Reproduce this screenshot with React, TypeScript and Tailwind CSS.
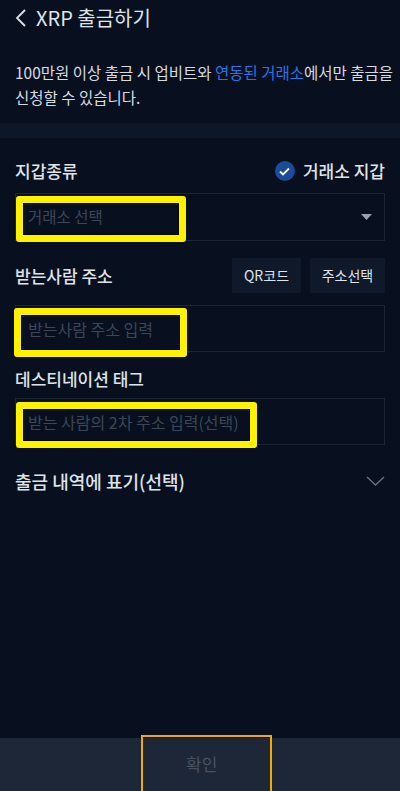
import * as React from 'react';

function YellowMark({ className }: { className: string }) {
  return (
    <div
      className={`absolute rounded-[3px] border-[7px] border-[#fff200] pointer-events-none ${className}`}
    >
      <div className="w-full h-full border border-black/60" />
    </div>
  );
}

export default function App() {
  return (
    <div
      className="w-[400px] h-[791px] bg-[#08101f] flex flex-col text-[#dfe3e9]"
      style={{ fontFamily: '"Noto Sans CJK KR", "Noto Sans", sans-serif' }}
    >
      {/* header */}
      <div className="h-[35px] flex items-center px-[14px] gap-[9px]">
        <svg width="13" height="20" viewBox="0 0 13 20" fill="none" stroke="#dfe3e9" strokeWidth="1.8">
          <path d="M11 2 L3 10 L11 18" />
        </svg>
        <span className="text-[20px] leading-none">XRP 출금하기</span>
      </div>

      {/* notice */}
      <div className="pl-[15px] pt-[25px] pb-[13px] text-[15.5px] leading-[25px] text-[#d7dbe1] whitespace-nowrap">
        <div>
          100만원 이상 출금 시 업비트와 <span className="text-[#1f78e6]">연동된 거래소</span>에서만 출금을
        </div>
        <div>신청할 수 있습니다.</div>
      </div>
      <div className="h-[15px] bg-[#0e1727]" />

      {/* form */}
      <div className="px-[15px] flex flex-col">
        <div className="mt-[21px] h-[24px] flex items-center justify-between">
          <span className="text-[17px] font-medium">지갑종류</span>
          <div className="flex items-center gap-[8px]">
            <div className="w-[20px] h-[20px] rounded-full bg-[#1b4b9a] flex items-center justify-center">
              <svg width="11" height="9" viewBox="0 0 11 9" fill="none" stroke="white" strokeWidth="1.8">
                <path d="M1 4.5 L4 7.5 L10 1.5" />
              </svg>
            </div>
            <span className="text-[17px] font-medium">거래소 지갑</span>
          </div>
        </div>

        <div className="relative mt-[10px] h-[48px] border border-[#1c2535] flex items-center justify-between pl-[12px] pr-[12px]">
          <span className="text-[15.5px] text-[#3c4657]">거래소 선택</span>
          <svg width="11" height="6" viewBox="0 0 11 6" fill="#9aa1ab">
            <path d="M0 0 H11 L5.5 6 Z" />
          </svg>
          <YellowMark className="left-0 top-[2px] w-[170px] h-[46px]" />
        </div>

        <div className="mt-[17px] h-[35px] flex items-center justify-between">
          <span className="text-[17px] font-medium">받는사람 주소</span>
          <div className="flex gap-[9px]">
            <div className="w-[69px] h-[35px] bg-[#101929] flex items-center justify-center text-[14px]">QR코드</div>
            <div className="w-[75px] h-[35px] bg-[#101929] flex items-center justify-center text-[14px]">주소선택</div>
          </div>
        </div>

        <div className="relative mt-[12px] h-[47px] border border-[#1c2535] flex items-center pl-[12px]">
          <span className="text-[16px] text-[#3c4657]">받는사람 주소 입력</span>
          <YellowMark className="-left-[2px] top-[2px] w-[173px] h-[49px]" />
        </div>

        <div className="mt-[15px] h-[24px] flex items-center">
          <span className="text-[17px] font-medium">데스티네이션 태그</span>
        </div>

        <div className="relative mt-[7px] h-[47px] border border-[#1c2535] flex items-center pl-[12px]">
          <span className="text-[16px] text-[#3c4657]">받는 사람의 2차 주소 입력(선택)</span>
          <YellowMark className="left-0 top-[3px] w-[241px] h-[46px]" />
        </div>

        <div className="mt-[23px] h-[26px] flex items-center justify-between">
          <span className="text-[18px] font-medium">출금 내역에 표기(선택)</span>
          <svg width="19" height="10" viewBox="0 0 19 10" fill="none" stroke="#6b7380" strokeWidth="1.3">
            <path d="M1 1 L9.5 9 L18 1" />
          </svg>
        </div>
      </div>

      <div className="flex-1" />

      {/* footer */}
      <div className="h-[53px] bg-[#1e2737] flex pl-[141px]">
        <div className="-mt-[3px] w-[131px] h-[58px] border-[2px] border-[#f2a900] flex items-center pl-[43px]">
          <span className="text-[17px] text-[#465062]">확인</span>
        </div>
      </div>
    </div>
  );
}
